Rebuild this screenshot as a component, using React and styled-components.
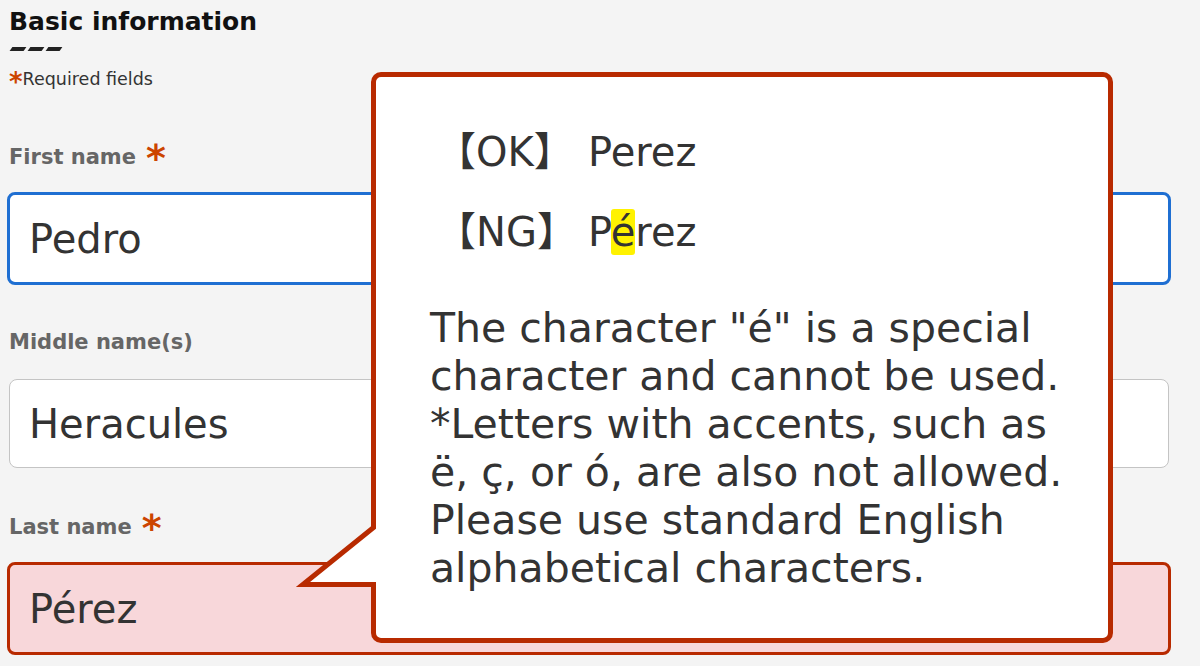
import React from 'react';
import styled, { createGlobalStyle } from 'styled-components';

const Global = createGlobalStyle`
  html, body { margin: 0; padding: 0; background: #f4f4f4; }
  body { font-family: "DejaVu Sans", "Noto Sans CJK JP", sans-serif; }
`;

const Page = styled.div`
  position: relative;
  width: 1200px;
  height: 666px;
  overflow: hidden;
  box-sizing: border-box;
  padding: 7px 29px 0 7px;
  background: #f4f4f4;
  color: #333;
`;

const Title = styled.h2`
  margin: 0 0 0 2px;
  font-size: 25px;
  line-height: 30px;
  font-weight: 700;
  color: #111;
`;

const Dashes = styled.div`
  display: flex;
  gap: 4px;
  height: 4px;
  margin: 10px 0 0 4px;
`;

const Dash = styled.span`
  width: 14px;
  height: 4px;
  background: #222;
  transform: skewX(-35deg);
`;

const Required = styled.p`
  margin: 16px 0 0 2px;
  font-size: 17.5px;
  line-height: 24px;
  color: #333;
`;

const Star = styled.span`
  color: #cc4400;
  font-weight: 700;
  font-size: ${(p) => p.$size}px;
  line-height: 0;
  margin-left: ${(p) => p.$gap || 0}px;
  vertical-align: ${(p) => p.$lift || 0}px;
`;

const Fields = styled.div`
  display: flex;
  flex-direction: column;
  gap: 42px;
  margin-top: 51px;
`;

const Field = styled.div`
  display: flex;
  flex-direction: column;
  gap: 20px;
`;

const Label = styled.label`
  margin-left: 2px;
  font-size: 21px;
  line-height: 30px;
  font-weight: 700;
  color: #666;
  white-space: nowrap;
`;

const TextBox = styled.div`
  box-sizing: border-box;
  display: flex;
  align-items: center;
  height: ${(p) => (p.$state ? 93 : 89)}px;
  margin: ${(p) => (p.$state ? 0 : 2)}px;
  padding-left: 19px;
  border-radius: 8px;
  border: ${(p) =>
    p.$state === 'focus'
      ? '3px solid #1f6fd2'
      : p.$state === 'error'
      ? '3px solid #b82a00'
      : '1px solid #c4c4c4'};
  background: ${(p) => (p.$state === 'error' ? '#f8d7da' : '#fff')};
  font-size: 40px;
  color: #333;
`;

const Callout = styled.div`
  position: absolute;
  left: 371px;
  top: 72px;
  width: 742px;
  height: 571px;
  box-sizing: border-box;
  padding: 51px 0 0 54px;
  background: #fff;
  border: 5px solid #b82a00;
  border-radius: 10px;
  color: #333;
`;

const Tail = styled.svg`
  position: absolute;
  left: -85px;
  top: 433px;
  width: 85px;
  height: 85px;
  overflow: hidden;
`;

const Examples = styled.div`
  display: flex;
  flex-direction: column;
  gap: 32px;
`;

const Example = styled.div`
  display: grid;
  grid-template-columns: 158px auto;
  font-size: 40px;
  line-height: 48px;
  white-space: nowrap;
`;

const Tag = styled.span`
  padding-left: 6px;
`;

const Mark = styled.span`
  background: #fff200;
  border-radius: 3px;
`;

const Message = styled.p`
  margin: 48px 0 0;
  font-size: 41px;
  line-height: 48px;
  white-space: nowrap;
`;

const Line = styled.span`
  display: block;
`;

export default function App() {
  return (
    <>
      <Global />
      <Page>
        <Title>Basic information</Title>
        <Dashes>
          <Dash />
          <Dash />
          <Dash />
        </Dashes>
        <Required>
          <Star $size={26} $lift={-6}>*</Star>Required fields
        </Required>
        <Fields>
          <Field>
            <Label>
              First name<Star $size={38} $gap={10} $lift={-7}>*</Star>
            </Label>
            <TextBox $state="focus">Pedro</TextBox>
          </Field>
          <Field>
            <Label>Middle name(s)</Label>
            <TextBox>Heracules</TextBox>
          </Field>
          <Field>
            <Label>
              Last name<Star $size={38} $gap={10} $lift={-7}>*</Star>
            </Label>
            <TextBox $state="error">Pérez</TextBox>
          </Field>
        </Fields>

        <Callout>
          <Tail viewBox="0 0 85 85">
            <path d="M91.8 10 L11.9 74.5 L92 74.5 Z" fill="#fff" stroke="none" />
            <path
              d="M91.8 10 L11.9 74.5 L92 74.5"
              fill="none"
              stroke="#b82a00"
              strokeWidth="5"
              strokeLinejoin="miter"
              strokeMiterlimit="10"
            />
          </Tail>
          <Examples>
            <Example>
              <Tag>【OK】</Tag>
              <span>Perez</span>
            </Example>
            <Example>
              <Tag>【NG】</Tag>
              <span>
                P<Mark>é</Mark>rez
              </span>
            </Example>
          </Examples>
          <Message>
            <Line>The character "é" is a special</Line>
            <Line>character and cannot be used.</Line>
            <Line>*Letters with accents, such as</Line>
            <Line>ë, ç, or ó, are also not allowed.</Line>
            <Line>Please use standard English</Line>
            <Line>alphabetical characters.</Line>
          </Message>
        </Callout>
      </Page>
    </>
  );
}
